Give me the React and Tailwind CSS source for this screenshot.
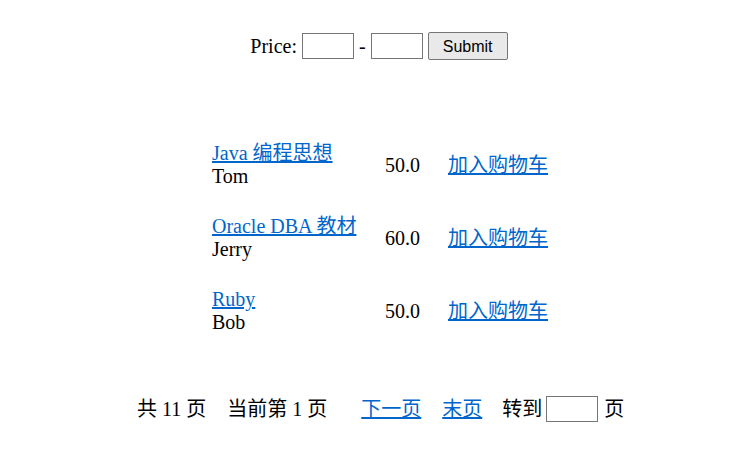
const books = [
  { title: "Java 编程思想", author: "Tom", price: "50.0" },
  { title: "Oracle DBA 教材", author: "Jerry", price: "60.0" },
  { title: "Ruby", author: "Bob", price: "50.0" },
];

const serif = "font-['Liberation_Serif','Noto_Sans_CJK_SC',serif]";

export default function App() {
  return (
    <div className={`w-[750px] h-[454px] bg-white text-black text-[20px] leading-[23px] ${serif}`}>
      {/* price filter */}
      <form className="flex items-center justify-center pl-[8px] pt-[32px] h-[60px]" onSubmit={(e) => e.preventDefault()}>
        <span className="mr-[5px]">Price:</span>
        <input className="w-[52px] h-[26px] border border-[#767676] bg-white" />
        <span className="mx-[5px]">-</span>
        <input className="w-[52px] h-[26px] border border-[#767676] bg-white" />
        <button
          type="submit"
          className="ml-[5px] w-[80px] h-[28px] border border-[#767676] rounded-[2px] bg-[#e9e9e9] text-[16px] font-['Liberation_Sans',sans-serif] text-black"
        >
          Submit
        </button>
      </form>

      {/* book list */}
      <div className="flex flex-col items-start pl-[212px] pt-[82px] gap-[27px]">
        {books.map((b) => (
          <div key={b.title} className="flex items-center">
            <div className="w-[173px] flex flex-col">
              <a href="#" className="text-[#0066cc] underline self-start">{b.title}</a>
              <span>{b.author}</span>
            </div>
            <div className="w-[63px]">{b.price}</div>
            <a href="#" className="text-[#0066cc] underline">加入购物车</a>
          </div>
        ))}
      </div>

      {/* pagination */}
      <div className="flex items-center pl-[137px] pt-[62px]">
        <span>共 11 页</span>
        <span className="ml-[21px]">当前第 1 页</span>
        <a href="#" className="ml-[34px] text-[#0066cc] underline">下一页</a>
        <a href="#" className="ml-[21px] text-[#0066cc] underline">末页</a>
        <span className="ml-[20px]">转到</span>
        <input className="ml-[4px] w-[52px] h-[26px] border border-[#767676] bg-white" />
        <span className="ml-[6px]">页</span>
      </div>
    </div>
  );
}
